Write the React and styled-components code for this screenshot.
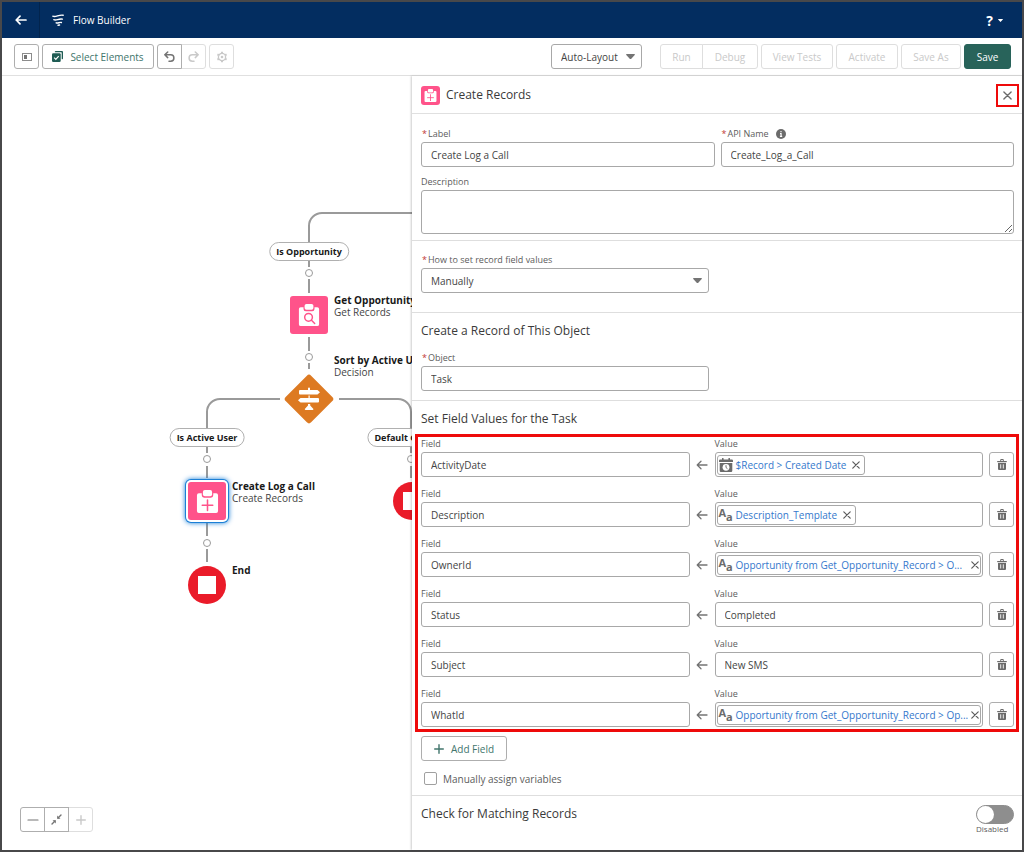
import React, { useState } from 'react';
import styled, { createGlobalStyle, css } from 'styled-components';

const font = "'Open Sans', 'Noto Sans', sans-serif";

const fieldValues = [
    { field: 'ActivityDate', pill: '$Record > Created Date', icon: 'date' },
    { field: 'Description', pill: 'Description_Template', icon: 'text' },
    { field: 'OwnerId', pill: 'Opportunity from Get_Opportunity_Record > O...', icon: 'text', full: true },
    { field: 'Status', value: 'Completed' },
    { field: 'Subject', value: 'New SMS' },
    { field: 'WhatId', pill: 'Opportunity from Get_Opportunity_Record > Op...', icon: 'text', full: true },
];

/* ---------- icons ---------- */

const BackIcon = () => (
    <svg width="12" height="10" viewBox="0 0 12 10" fill="none" stroke="#fff" strokeWidth="1.7" strokeLinecap="round" strokeLinejoin="round">
        <path d="M11 5H1.2M5 1.2 1.2 5 5 8.8" />
    </svg>
);

const FlowIcon = () => (
    <svg width="12" height="12" viewBox="0 0 12 12" fill="none" stroke="#fff" strokeWidth="1.4" strokeLinecap="round">
        <path d="M.8 2.200C4 3.600 6.500.4 11.200 1.200M1.800 5.700C4.300 7 6.500 4.300 10.400 5.100M4.200 8.800C6 9.500 7.300 8 9.400 8.500M6 11.200 7.600 11" />
    </svg>
);

const PanelIcon = () => (
    <svg width="10" height="8" viewBox="0 0 10 8">
        <rect x=".5" y=".5" width="9" height="7" fill="none" stroke="#8c8c8c" />
        <rect x="2" y="2" width="3" height="4" fill="#747474" />
    </svg>
);

const SelectIcon = () => (
    <svg width="11" height="11" viewBox="0 0 11 11">
        <path d="M3.500 0H10a1 1 0 0 1 1 1v6.500a.8.8 0 0 1-1.300.5V1.800a.5.5 0 0 0-.5-.5H3A.8.8 0 0 1 3.500 0Z" fill="#1f5c54" />
        <rect x="0" y="2.300" width="8.700" height="8.700" rx="1.200" fill="#1f5c54" />
        <path d="m2.200 6.700 1.600 1.600 2.900-3.200" fill="none" stroke="#fff" strokeWidth="1.200" />
    </svg>
);

const UndoIcon = ({ flip }) => (
    <svg width="11" height="11" viewBox="0 0 11 11" fill="none" stroke="currentColor" strokeWidth="1.500" strokeLinecap="round" strokeLinejoin="round">
        <path
            d={flip ? 'M7.300 1 10.200 3.800 7.300 6.600M10 3.800H4.300a3.200 3.200 0 0 0 0 6.400H6' : 'M3.700 1 .8 3.800 3.700 6.600M1 3.800h5.700a3.200 3.200 0 0 1 0 6.400H5'}
        />
    </svg>
);

const GearIcon = () => (
    <svg width="12" height="12" viewBox="0 0 12 12" fill="none" stroke="currentColor">
        <circle cx="6" cy="6" r="3.600" strokeWidth="1.300" />
        <circle cx="6" cy="6" r="1.300" fill="currentColor" stroke="none" />
        <path d="M6 .7v1.600M6 9.700v1.600M1.400 3.350l1.400.8M9.200 7.850l1.400.8M1.400 8.650l1.400-.8M9.200 4.150l1.400-.8" strokeWidth="2" />
    </svg>
);

const CloseIcon = ({ size = 8 }) => (
    <svg width={size} height={size} viewBox="0 0 8 8" stroke="currentColor" strokeWidth="1.200" strokeLinecap="round">
        <path d="M.8.8l6.400 6.400M7.200.8.800 7.200" />
    </svg>
);

const Caret = ({ size = 9 }) => (
    <svg width={size} height={size * 0.6} viewBox="0 0 10 6">
        <path d="M.8 0h8.400a.6.6 0 0 1 .5 1L5.500 5.700a.7.7 0 0 1-1 0L.3 1a.6.6 0 0 1 .5-1Z" fill="currentColor" />
    </svg>
);

const ClipboardIcon = ({ size, kind }) => (
    <svg width={size} height={size} viewBox="0 0 24 24">
        <path d="M3 3.500h3V5.500a2.500 2.500 0 0 0 2.500 2.500h7A2.500 2.500 0 0 0 18 5.500V3.500h3a2 2 0 0 1 2 2V22a2 2 0 0 1-2 2H3a2 2 0 0 1-2-2V5.500a2 2 0 0 1 2-2Z" fill="#fff" />
        <rect x="7.200" y="0" width="9.600" height="6.400" rx="2" fill="#fff" />
        {kind === 'search' ? (
            <g fill="none" stroke="#ff538a" strokeWidth="1.600" strokeLinecap="round">
                <circle cx="11.500" cy="14.500" r="4.200" />
                <path d="m14.700 17.700 3.500 3.500" />
            </g>
        ) : (
            <path d="M12 10.500v11M6.500 16h11" stroke="#ff538a" strokeWidth="1.600" strokeLinecap="round" />
        )}
    </svg>
);

const SignpostIcon = () => (
    <svg width="24" height="24" viewBox="0 0 24 24" fill="#fff">
        <path d="M11 1.500a1 1 0 0 1 2 0V3h7.500L23 5.200 20.500 7.500H3a1 1 0 0 1-1-1V4a1 1 0 0 1 1-1h8ZM3.500 11h8V8.500h1.200V11H21a1 1 0 0 1 1 1v2.500a1 1 0 0 1-1 1H3.500L1 13.200ZM11 17h2.200v1.500l3 3.200a.7.7 0 0 1-.5 1.200H8.500a.7.7 0 0 1-.5-1.200l3-3.200Z" />
    </svg>
);

const InfoIcon = () => (
    <svg width="10" height="10" viewBox="0 0 10 10">
        <circle cx="5" cy="5" r="5" fill="#6b6b6b" />
        <path d="M5 2v1.300M4 4.600h1.100v2.600M3.900 7.400h2.300" stroke="#fff" strokeWidth="1.100" fill="none" />
    </svg>
);

const ArrowLeft = () => (
    <svg width="12" height="10" viewBox="0 0 12 10" fill="none" stroke="#747474" strokeWidth="1.300" strokeLinecap="round" strokeLinejoin="round">
        <path d="M11 5H1.200M5 1.200 1.200 5 5 8.800" />
    </svg>
);

const DateIcon = () => (
    <svg width="14" height="14" viewBox="0 0 14 14">
        <path d="M1.200 1.500H3V.7a.8.8 0 0 1 1.600 0v.8h4.800V.7A.8.8 0 0 1 11 .7v.8h1.800A1.200 1.200 0 0 1 14 2.700V4H0V2.700a1.200 1.200 0 0 1 1.200-1.200ZM.7 5h12.600v7.800a1.200 1.200 0 0 1-1.200 1.200H1.900A1.200 1.200 0 0 1 .7 12.800Z" fill="#6b6b6b" />
        <circle cx="7" cy="9.300" r="3.400" fill="#fff" />
        <path d="M7 7.600v1.900l1.200 1" fill="none" stroke="#6b6b6b" strokeWidth="1" strokeLinecap="round" />
    </svg>
);

const TrashIcon = () => (
    <svg width="10" height="11" viewBox="0 0 10 11">
        <path d="M.7 1.900h2.500V1a1 1 0 0 1 1-1h1.600a1 1 0 0 1 1 1v.9h2.500a.6.6 0 0 1 0 1.300H.7a.6.6 0 0 1 0-1.300Zm3.500-.9v.9h1.600V1ZM1 4h8v5.900A1.100 1.100 0 0 1 7.900 11H2.100A1.100 1.100 0 0 1 1 9.900Z" fill="#6b6b6b" fillRule="evenodd" />
        <path d="M3.700 5.300v4.200M6.300 5.300v4.200" stroke="#fff" strokeWidth=".9" />
    </svg>
);

const PlusIcon = ({ size = 10 }) => (
    <svg width={size} height={size} viewBox="0 0 10 10" stroke="currentColor" strokeWidth="1.400" strokeLinecap="round">
        <path d="M5 .7v8.600M.7 5h8.600" />
    </svg>
);

const MinusIcon = () => (
    <svg width="12" height="10" viewBox="0 0 12 10" stroke="currentColor" strokeWidth="1.200" strokeLinecap="round">
        <path d="M1 5h10" />
    </svg>
);

const FitIcon = () => (
    <svg width="11" height="11" viewBox="0 0 11 11" fill="currentColor" stroke="currentColor" strokeLinecap="round">
        <path d="M6.200 1.500v3.300h3.300ZM4.800 9.500V6.200H1.500Z" stroke="none" />
        <path d="M7 4l3-3M4 7l-3 3" strokeWidth="1.400" />
    </svg>
);

/* ---------- app ---------- */

function Canvas() {
    return (
        <CanvasArea>
            <Connectors aria-hidden="true">
                <path d="M412 137H320a13 13 0 0 0-13 13v17M307 185v6M307 203v14M307 261v14M307 287v6" />
                <path d="M278 323h-60a13 13 0 0 0-13 13v17M205 371v6M205 390v12M205 447v13M205 473v13" />
                <path d="M337 323h59a13 13 0 0 1 13 13v17M409 371v6M409 390v12" />
                <g strokeWidth="1">
                    <circle cx="307" cy="197" r="3.500" />
                    <circle cx="307" cy="281" r="3.500" />
                    <circle cx="205" cy="383" r="3.500" />
                    <circle cx="205" cy="467" r="3.500" />
                    <circle cx="409" cy="383" r="3.500" />
                </g>
            </Connectors>

            <BranchLabel $x={307} $y={166}>Is Opportunity</BranchLabel>
            <BranchLabel $x={205} $y={352}>Is Active User</BranchLabel>
            <BranchLabel $x={411} $y={352}>Default Outcome</BranchLabel>

            <Node $x={307} $y={239}><ClipboardIcon size={22} kind="search" /></Node>
            <NodeText $x={332} $y={218}><b>Get Opportunity Record</b><span>Get Records</span></NodeText>

            <Decision $x={307} $y={323}><SignpostIcon /></Decision>
            <NodeText $x={332} $y={278}><b>Sort by Active User</b><span>Decision</span></NodeText>

            <Node $x={205} $y={425} $selected><ClipboardIcon size={23} kind="plus" /></Node>
            <NodeText $x={230} $y={404}><b>Create Log a Call</b><span>Create Records</span></NodeText>

            <EndNode $x={205} $y={509} />
            <NodeText $x={230} $y={488}><b>End</b></NodeText>
            <EndNode $x={410} $y={425} />

            <ZoomControls>
                <ButtonGroup>
                    <IconButton aria-label="Zoom out"><MinusIcon /></IconButton>
                    <IconButton aria-label="Zoom to fit"><FitIcon /></IconButton>
                    <IconButton aria-label="Zoom in" disabled><PlusIcon /></IconButton>
                </ButtonGroup>
            </ZoomControls>
        </CanvasArea>
    );
}

function FieldRow({ item, index }) {
    return (
        <Row>
            <Field>
                <Label htmlFor={`field-${index}`}>Field</Label>
                <Input id={`field-${index}`} defaultValue={item.field} />
            </Field>
            <ArrowCell><ArrowLeft /></ArrowCell>
            <Field>
                {item.pill ? (
                    <>
                        <Label as="span">Value</Label>
                        <PillBox>
                            <Pill $full={item.full}>
                                {item.icon === 'date' ? <DateIcon /> : <TextType>A<small>a</small></TextType>}
                                <span>{item.pill}</span>
                                <PillClose aria-label="Remove" $tight={item.full}><CloseIcon /></PillClose>
                            </Pill>
                        </PillBox>
                    </>
                ) : (
                    <>
                        <Label htmlFor={`value-${index}`}>Value</Label>
                        <Input id={`value-${index}`} defaultValue={item.value} />
                    </>
                )}
            </Field>
            <IconButton aria-label="Delete"><TrashIcon /></IconButton>
        </Row>
    );
}

function RecordPanel() {
    const [manual, setManual] = useState(false);
    const [matching, setMatching] = useState(false);

    return (
        <Panel>
            <PanelHeader>
                <PanelIconTile><ClipboardIcon size={13} kind="plus" /></PanelIconTile>
                <Heading>Create Records</Heading>
                <CloseButton aria-label="Close"><CloseIcon size={9} /></CloseButton>
            </PanelHeader>

            <Section $top={13} $bottom={6}>
                <TwoColumns>
                    <Field>
                        <Label htmlFor="label"><Required>*</Required>Label</Label>
                        <Input id="label" defaultValue="Create Log a Call" />
                    </Field>
                    <Field>
                        <Label htmlFor="api"><Required>*</Required>API Name <InfoIcon /></Label>
                        <Input id="api" defaultValue="Create_Log_a_Call" />
                    </Field>
                </TwoColumns>
                <Field>
                    <Label htmlFor="description">Description</Label>
                    <TextArea id="description" />
                </Field>
            </Section>

            <Section $top={12} $bottom={19}>
                <HalfField>
                    <Label htmlFor="how"><Required>*</Required>How to set record field values</Label>
                    <SelectBox>
                        <Select id="how"><option>Manually</option></Select>
                        <Caret />
                    </SelectBox>
                </HalfField>
            </Section>

            <Section $top={9} $bottom={9}>
                <Heading>Create a Record of This Object</Heading>
                <HalfField $gap>
                    <Label htmlFor="object"><Required>*</Required>Object</Label>
                    <Input id="object" defaultValue="Task" />
                </HalfField>
            </Section>

            <Section $top={9} $bottom={10}>
                <Heading>Set Field Values for the Task</Heading>
                <Highlight>
                    {fieldValues.map((item, index) => (
                        <FieldRow key={item.field} item={item} index={index} />
                    ))}
                </Highlight>
                <AddButton><PlusIcon />Add Field</AddButton>
                <CheckLabel>
                    <Checkbox type="checkbox" checked={manual} onChange={() => setManual(!manual)} />
                    Manually assign variables
                </CheckLabel>
            </Section>

            <Section $top={9} $bottom={9}>
                <MatchRow>
                    <Heading>Check for Matching Records</Heading>
                    <ToggleLabel>
                        <Toggle
                            type="checkbox"
                            role="switch"
                            checked={matching}
                            onChange={() => setMatching(!matching)}
                        />
                        {matching ? 'Enabled' : 'Disabled'}
                    </ToggleLabel>
                </MatchRow>
            </Section>
        </Panel>
    );
}

function App() {
    return (
        <Window>
            <GlobalStyle />
            <Header>
                <BackButton aria-label="Back"><BackIcon /></BackButton>
                <FlowIcon />
                <AppName>Flow Builder</AppName>
                <HelpButton aria-label="Help">?<Caret size={5} /></HelpButton>
            </Header>
            <Toolbar>
                <IconButton aria-label="Toggle toolbox"><PanelIcon /></IconButton>
                <Button $accent $width={112}><SelectIcon />Select Elements</Button>
                <ButtonGroup>
                    <IconButton aria-label="Undo"><UndoIcon /></IconButton>
                    <IconButton aria-label="Redo" disabled><UndoIcon flip /></IconButton>
                </ButtonGroup>
                <IconButton aria-label="Settings" disabled><GearIcon /></IconButton>
                <LayoutBox>
                    <Select aria-label="Layout" $compact><option>Auto-Layout</option></Select>
                    <Caret />
                </LayoutBox>
                <ButtonGroup>
                    <Button disabled $width={43}>Run</Button>
                    <Button disabled $width={56}>Debug</Button>
                </ButtonGroup>
                <Button disabled $width={72}>View Tests</Button>
                <Button disabled $width={62}>Activate</Button>
                <Button disabled $width={60}>Save As</Button>
                <SaveButton $width={47}>Save</SaveButton>
            </Toolbar>
            <Main>
                <Canvas />
                <RecordPanel />
            </Main>
        </Window>
    );
}

/* ---------- styles ---------- */

const GlobalStyle = createGlobalStyle`
    *, *::before, *::after { box-sizing: border-box; }
    body {
        margin: 0;
        font-family: ${font};
        font-size: 10px;
        color: #444;
        background: #fff;
    }
    button, input, select, textarea { font: inherit; color: inherit; margin: 0; }
    button { cursor: pointer; }
    svg { flex: none; display: block; }
`;

const Window = styled.div`
    display: flex;
    flex-direction: column;
    min-height: 100vh;
    border: 2px solid #48484a;
`;

const Header = styled.header`
    display: flex;
    align-items: center;
    height: 36px;
    padding-right: 19px;
    background: #032d60;
    color: #fff;
`;

const BackButton = styled.button`
    display: flex;
    align-items: center;
    justify-content: center;
    width: 38px;
    height: 100%;
    margin-right: 12px;
    padding: 0;
    border: 0;
    border-right: 1px solid #02244d;
    background: none;
`;

const AppName = styled.span`
    margin-left: 9px;
`;

const HelpButton = styled.button`
    display: flex;
    align-items: center;
    gap: 5px;
    margin-left: auto;
    padding: 0;
    border: 0;
    background: none;
    color: #fff;
    font-size: 14px;
    font-weight: 700;
`;

const Toolbar = styled.div`
    display: flex;
    align-items: center;
    gap: 3px;
    height: 38px;
    padding: 0 11px 0 12px;
    border-bottom: 1px solid #e0e0e0;
`;

const Button = styled.button`
    display: inline-flex;
    align-items: center;
    justify-content: center;
    gap: 7px;
    height: 25px;
    min-width: ${({ $width }) => ($width ? `${$width}px` : 'auto')};
    padding: 0;
    border: 1px solid #aeaeae;
    border-radius: 3px;
    background: #fff;
    color: ${({ $accent }) => ($accent ? '#41756c' : '#5c5c5c')};
    white-space: nowrap;

    &:disabled {
        border-color: #dedede;
        color: #c9c9c9;
        cursor: default;
    }
`;

const IconButton = styled(Button)`
    width: 25px;
    color: #747474;
`;

const SaveButton = styled(Button)`
    border-color: #28635a;
    background: #28635a;
    color: #fff;
`;

const ButtonGroup = styled.div`
    display: flex;

    & > button:not(:first-child) {
        margin-left: -1px;
        border-top-left-radius: 0;
        border-bottom-left-radius: 0;
    }
    & > button:not(:last-child) {
        border-top-right-radius: 0;
        border-bottom-right-radius: 0;
    }
    & > button:not(:disabled) {
        z-index: 1;
    }
`;

const SelectBox = styled.div`
    position: relative;

    & > svg {
        position: absolute;
        top: 10px;
        right: 7px;
        color: #747474;
        pointer-events: none;
    }
`;

const LayoutBox = styled(SelectBox)`
    width: 91px;
    margin-left: auto;
    margin-right: 15px;
`;

const control = css`
    display: block;
    width: 100%;
    border: 1px solid #a8a8a8;
    border-radius: 3px;
    background: #fff;
    color: #444;
    outline: none;
`;

const Input = styled.input`
    ${control}
    height: 25px;
    padding: 0 9px;
`;

const TextArea = styled.textarea`
    ${control}
    height: 44px;
    padding: 4px 9px;
    resize: vertical;
`;

const Select = styled.select`
    ${control}
    height: 25px;
    padding: 0 ${({ $compact }) => ($compact ? '9px' : '20px')} 0 9px;
    appearance: none;
`;

const Main = styled.main`
    display: grid;
    grid-template-columns: 410px 1fr;
    flex: 1;
`;

const CanvasArea = styled.section`
    position: relative;
    overflow: hidden;
`;

const Connectors = styled.svg`
    position: absolute;
    inset: 0;
    width: 100%;
    height: 100%;
    fill: none;
    stroke: #9a9a9a;
    stroke-width: 2px;
`;

/* everything on the canvas is placed by its centre, except captions */
const centred = css`
    position: absolute;
    left: ${({ $x }) => $x}px;
    top: ${({ $y }) => $y}px;
    transform: translate(-50%, -50%);
    display: flex;
    align-items: center;
    justify-content: center;
`;

const BranchLabel = styled.div`
    position: absolute;
    left: ${({ $x }) => $x}px;
    top: ${({ $y }) => $y}px;
    transform: translateX(-50%);
    height: 19px;
    padding: 0 6px;
    border: 1px solid #b0b0b0;
    border-radius: 10px;
    background: #fff;
    color: #181818;
    font-size: 9px;
    font-weight: 700;
    line-height: 17px;
    white-space: nowrap;
`;

const Node = styled.div`
    ${centred}
    width: 38px;
    height: 38px;
    border-radius: 3px;
    background: #ff538a;
    box-shadow: ${({ $selected }) => ($selected ? '0 0 0 2px #fff, 0 0 0 3px #1b7fd6, 0 0 5px 3px #1b7fd6' : 'none')};
`;

const Decision = styled.div`
    ${centred}
    width: 50px;
    height: 50px;

    &::before {
        content: '';
        position: absolute;
        inset: 7px;
        border-radius: 3px;
        background: #dd7a22;
        transform: rotate(45deg);
    }
    & > svg { position: relative; }
`;

const EndNode = styled.div`
    ${centred}
    width: 38px;
    height: 38px;
    border-radius: 50%;
    background: #ea1b29;

    &::before {
        content: '';
        width: 18px;
        height: 18px;
        background: #fff;
    }
`;

const NodeText = styled.div`
    position: absolute;
    left: ${({ $x }) => $x}px;
    top: ${({ $y }) => $y}px;
    display: flex;
    flex-direction: column;
    line-height: 12px;
    white-space: nowrap;

    & b { color: #181818; }
`;

const ZoomControls = styled.div`
    position: absolute;
    left: 18px;
    bottom: 18px;
`;

const Panel = styled.aside`
    position: relative;
    background: #fff;
    box-shadow: -1px 0 2px rgba(0, 0, 0, 0.2);
`;

const PanelHeader = styled.div`
    display: flex;
    align-items: center;
    gap: 6px;
    height: 38px;
    padding: 1px 3px 0 9px;
    border-bottom: 1px solid #e0e0e0;
`;

const PanelIconTile = styled.div`
    display: flex;
    align-items: center;
    justify-content: center;
    width: 19px;
    height: 19px;
    border-radius: 3px;
    background: #ff538a;
`;

const Heading = styled.h2`
    margin: 0;
    font-size: 12px;
    font-weight: 400;
    line-height: 18px;
    color: #3a3a3a;
`;

const CloseButton = styled.button`
    display: flex;
    align-items: center;
    justify-content: center;
    width: 23px;
    height: 23px;
    margin-left: auto;
    padding: 0;
    border: 2px solid #ee0a0a;
    background: #fff;
    color: #6b6b6b;
`;

const Section = styled.section`
    padding: ${({ $top }) => $top}px 8px ${({ $bottom }) => $bottom}px 9px;

    &:not(:last-child) { border-bottom: 1px solid #dedede; }
`;

const TwoColumns = styled.div`
    display: grid;
    grid-template-columns: 1fr 1fr;
    gap: 6px;
    margin-bottom: 8px;
`;

const Field = styled.div`
    min-width: 0;
`;

const HalfField = styled.div`
    width: calc(50% - 9px);
    margin-top: ${({ $gap }) => ($gap ? '11px' : '0')};
`;

const Label = styled.label`
    display: flex;
    align-items: center;
    height: 14px;
    margin-bottom: 1px;
    font-size: 9px;
    line-height: 14px;
    color: #5c5c5c;

    & svg { margin-left: 7px; }
`;

const Required = styled.abbr`
    margin: 0 1px;
    color: #c23934;
`;

const Highlight = styled.div`
    display: flex;
    flex-direction: column;
    gap: 10px;
    margin: 6px -5px 4px -6px;
    padding: 0 2px 2px 3px;
    border: 3px solid #ee0a0a;
`;

const Row = styled.div`
    display: grid;
    grid-template-columns: 1fr 13px 1fr 25px;
    column-gap: 6px;
    align-items: end;
`;

const ArrowCell = styled.div`
    display: flex;
    align-items: center;
    justify-content: center;
    height: 25px;
`;

const PillBox = styled.div`
    ${control}
    display: flex;
    align-items: center;
    height: 25px;
    padding: 0 1px;
`;

const Pill = styled.span`
    display: inline-flex;
    align-items: center;
    gap: 3px;
    width: ${({ $full }) => ($full ? '100%' : 'auto')};
    height: 20px;
    padding: 0 1px;
    border: 1px solid #a8a8a8;
    border-radius: 3px;
    color: #3578cc;
    white-space: nowrap;
`;

const TextType = styled.b`
    display: flex;
    align-items: flex-start;
    flex: none;
    width: 14px;
    height: 16px;
    font-size: 11px;
    line-height: 12px;
    color: #6b6b6b;

    & small {
        align-self: flex-end;
        font-size: 11px;
        line-height: 12px;
    }
`;

const PillClose = styled.button`
    display: flex;
    margin-left: auto;
    padding: 0 ${({ $tight }) => ($tight ? '0' : '3px')};
    border: 0;
    background: none;
    color: #5c5c5c;
`;

const AddButton = styled(Button)`
    display: flex;
    width: 86px;
    color: #41756c;
`;

const CheckLabel = styled.label`
    display: flex;
    align-items: center;
    gap: 6px;
    height: 13px;
    margin: 11px 0 0 3px;
    color: #5c5c5c;
`;

const Checkbox = styled.input`
    appearance: none;
    width: 13px;
    height: 13px;
    border: 1px solid #a0a0a0;
    border-radius: 2px;
    background: #fff;

    &:checked { background: #28635a; }
`;

const MatchRow = styled.div`
    display: flex;
    justify-content: space-between;
    align-items: flex-start;
`;

const ToggleLabel = styled.label`
    display: flex;
    flex-direction: column;
    font-size: 8px;
    line-height: 10px;
    color: #5c5c5c;
`;

const Toggle = styled.input`
    appearance: none;
    width: 38px;
    height: 19px;
    border: 1px solid #8e8e8e;
    border-radius: 10px;
    background: #8e8e8e;

    &::before {
        content: '';
        display: block;
        width: 17px;
        height: 17px;
        border-radius: 50%;
        background: #fff;
    }
    &:checked::before { margin-left: auto; }
`;

export default App;
